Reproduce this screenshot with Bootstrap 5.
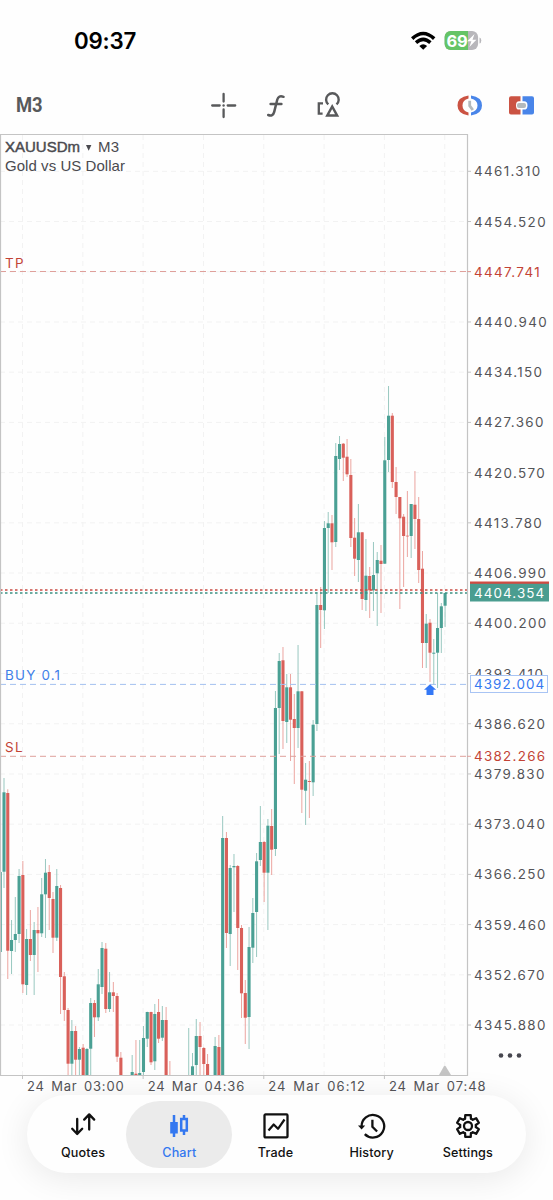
<!DOCTYPE html>
<html lang="en">
<head>
<meta charset="utf-8">
<meta name="viewport" content="width=device-width, initial-scale=1">
<title>XAUUSDm M3</title>
<link href="https://cdn.jsdelivr.net/npm/bootstrap@5.3.0/dist/css/bootstrap.min.css" rel="stylesheet">
<style>
body{font-family:Inter,"Liberation Sans",sans-serif;background:#fefefe;overflow:hidden}
.app{width:553px;height:1200px}
.statusbar{height:80px;padding:2px 71px 0 74px}
.clock{font-size:22.3px;font-weight:600;color:#000;letter-spacing:-.2px}
.toolbar{height:50px;padding:0 18px 0 16px}
.period{font:700 20px Roboto,sans-serif;color:#58595b;width:26px}
.period span{display:inline-block;transform:scaleX(.92);transform-origin:left}
.plot{display:block;height:965px;width:553px}
.plot text{font-family:Inter,sans-serif;font-size:13.4px}
.plot .sym{font-family:"Liberation Sans",sans-serif;font-size:15px}
.tabs{height:78px;width:499px;margin-left:27px;border-radius:39px;background:#fefefe;box-shadow:0 5px 34px rgba(0,0,0,.09);padding:6px 5px 5px 8px}
.tabitem{width:96.2px;border-radius:34px;color:#111;font-size:12.6px;font-weight:500;padding-top:11px;letter-spacing:.15px}
.tabitem svg{display:block;margin-bottom:5px}
.tabitem span{line-height:15px}
.tabitem.active{background:#ebebeb;color:#3478f0;width:106px;margin:0 -4.9px}
</style>
</head>
<body>
<div class="app d-flex flex-column">
  <header class="statusbar d-flex align-items-center justify-content-between">
    <span class="clock">09:37</span>
    <svg width="72" height="24" viewBox="410 29 72 24">
      <g fill="none" stroke="#000" stroke-width="3.500"><path d="M412.200 38.600Q423.200 28.400 434.200 38.600"/><path d="M416 42.600Q423.200 36 430.400 42.600"/></g>
      <path d="M419.300 46.100Q423.200 42.600 427.100 46.100L423.200 49.800Z"/>
      <clipPath id="bat"><rect x="444.600" y="31" width="33.500" height="19" rx="6"/></clipPath>
      <g clip-path="url(#bat)"><path fill="#b8b7bb" d="M444 31h35v20h-35z"/><path fill="#65c466" d="M444 31h24v20h-24z"/></g>
      <path d="M479.500 37.500q1.800.500 1.800 3t-1.800 3z" fill="#b8b7bb"/>
      <text x="446.600" y="46.600" font-size="16.500" font-weight="700" fill="#fff" textLength="21">69</text>
      <path d="M474.500 34l-7.300 7.300h4.200l-2 5.700 7-7.200h-3.900z" fill="#fff"/>
    </svg>
  </header>
  <nav class="toolbar d-flex align-items-center">
    <span class="period"><span>M3</span></span>
    <svg width="477" height="40" viewBox="58 85 477 40" class="ms-3 flex-shrink-0" fill="none" stroke="#58595b">
      <path d="M212.200 105.500h7.500M227.700 105.500h7.500M223.600 94v7.500M223.600 109.500v7.500" stroke-width="2.300" stroke-linecap="round"/>
      <circle cx="223.600" cy="105.500" r="1.200" fill="#58595b" stroke="none"/>
      <path d="M283.300 96.800q-4.900-1.800-6.200 2.700l-3.100 12.400q-1.200 4.800-6 3.100M270.400 103.900h10.800" stroke-width="2.500" stroke-linecap="round" transform="translate(.2 0)"/>
      <path d="M323 103.300h-4.200v10.400h3.800" stroke-width="2.300"/>
      <path d="M328.300 104.400A6.300 6.300 0 1 1 336.500 104.400" stroke-width="2.400"/>
      <path d="M332.200 106.500l-4.900 9h9.800z" stroke-width="2.500"/>
      <path d="M468.500 95.500Q457.500 97 457.500 105.500T468.500 115.500V112.500Q462.500 111 462.500 105.500T468.500 98.500Z" fill="#cb5343" stroke="none"/>
      <path d="M471 95.500Q482 97 482 105.500T471 115.500V112.500Q477.500 111 477.500 105.500T471 98.500Z" fill="#4985e9" stroke="none"/>
      <path d="M469.700 100.700v5l3.100 4.300" stroke="#b3b9bc" stroke-width="2.800"/>
      <path d="M511 96.300h9.500v4.900h-1.500q-3 0-3 4.200t3 4.200h1.500v5H511q-2 0-2-2v-14.300q0-2 2-2z" fill="#cb5343" stroke="none"/>
      <path d="M522.500 96.300H532q2 0 2 2v14.300q0 2-2 2h-9.500v-5h1.500q3.500 0 3.500-4.200t-3.500-4.200h-1.500z" fill="#4985e9" stroke="none"/>
      <rect x="517" y="103" width="9" height="5" rx="2" fill="#b3b9bc" stroke="none"/>
    </svg>
  </nav>
  <svg id="plot" class="plot flex-shrink-0" viewBox="0 130 553 965"></svg>
  <nav class="tabs d-flex flex-shrink-0 text-center">
    <div class="tabitem d-flex flex-column align-items-center">
      <svg width="28" height="28" viewBox="0 0 28 28" fill="none" stroke="#111" stroke-width="2.300" stroke-linecap="round" stroke-linejoin="round"><path d="M8.500 6v15M3.500 15.800l5 5.200 5-5.200M20.500 16.500V2M15.500 6.600l5-5.200 5 5.200" transform="translate(-.3 1)"/></svg><span>Quotes</span></div>
    <div class="tabitem active d-flex flex-column align-items-center flex-shrink-0">
      <svg width="28" height="28" viewBox="0 0 28 28" fill="none" stroke="#3478f0" stroke-width="2.500"><path d="M9 3v22M19 3v3M19 19v4"/><path d="M5.200 10h7.600v11.500H5.200z" fill="#3478f0" stroke="none"/><path d="M16.200 7h5.600v11.500h-5.600z"/></svg><span>Chart</span></div>
    <div class="tabitem d-flex flex-column align-items-center">
      <svg width="28" height="28" viewBox="0 0 28 28" fill="none" stroke="#111" stroke-width="2.300" stroke-linejoin="round"><rect x="2.500" y="2.400" width="23" height="23" rx="1"/><path d="M6.500 18.500l5.200-6 4.300 4.300 6.500-9.300" stroke-width="2.200"/></svg><span>Trade</span></div>
    <div class="tabitem d-flex flex-column align-items-center">
      <svg width="28" height="28" viewBox="0 0 28 28" fill="none" stroke="#111" stroke-width="2.300"><path d="M3.600 14.500A11.300 11.300 0 1 1 6.800 22.100"/><path d="M14.400 7.800v6.900l4.700 4.800"/><path d="M0 13.500h7.200l-3.600 4z" fill="#111" stroke="none"/></svg><span>History</span></div>
    <div class="tabitem d-flex flex-column align-items-center">
      <svg width="28" height="28" viewBox="0 0 28 28" fill="none" stroke="#111" stroke-width="2.300" stroke-linejoin="round"><path id="gear"/><circle cx="14" cy="14" r="4"/></svg><span>Settings</span></div>
  </nav>
</div>
<script>
// Candles: slot, direction, high, body top, body bottom, low (canvas y)
const bars = `-1 G 872 872 952 952
0 G 778 792.3 871.7 888
1 R 789.3 793 950.7 979
2 G 920 940 951 974
3 G 897 934 940 952
4 G 869 876 934 943
5 R 861 875 984.3 993
6 G 929 939 985 995
7 R 910 939 955 961
8 G 922 930 955 995
9 R 907 930 933.3 972
10 G 878 894.3 933.3 937
11 G 859 872.7 894.3 938
12 R 865 872 898 930
13 R 892 899 937.7 953
14 G 869 886 937.7 941
15 R 885 888 977 1014
16 R 972 976.3 1010 1021
17 R 1008 1010 1063.7 1075
18 G 1020 1031 1063.7 1075
19 R 1026 1031 1059.7 1075
20 G 1047 1049 1059.7 1075
21 R 1044 1047.7 1075 1075
22 G 1048 1049 1075 1075
23 G 998 1003 1048.7 1075
24 R 1000 1003 1017.3 1037
25 G 969 984.3 1017.3 1021
26 G 942 948 987 994
27 R 943 948.7 1009 1013
28 G 972 992.3 1009 1012
29 R 982 992.3 996 1012
30 R 993 996 1056.7 1062
31 R 1052 1057.7 1075 1075
34 G 1055 1072 1075 1075
35 R 1040 1073.7 1075 1075
36 G 1040 1073 1075 1075
37 G 1026 1038 1072 1075
38 G 1011.7 1012 1038.7 1047
39 R 1011.7 1012 1062.3 1065
40 G 1004 1014 1061.3 1070
41 R 999 1012 1038.7 1043
42 G 1006 1020 1037.7 1041
43 R 1007 1020 1075 1075
44 R 1061 1075 1075 1075
49 G 1028 1075 1075 1075
50 G 1053 1066.3 1075 1075
51 G 1019 1036 1065 1075
52 R 1022 1036 1047 1075
53 R 1047 1048 1064 1075
54 R 1054 1064 1075 1075
56 G 1037 1046 1075 1075
57 R 1035 1047 1075 1075
58 G 816 838 1075 1075
59 R 832 838 933 948
60 G 865 868 934 966
61 G 854 866 867.3 912
62 R 865 866 928 970
63 R 925 928 993.3 1018
64 R 980 993 1017.7 1044
65 G 927 947 1017 1049
66 G 898 913 947.7 963
67 G 853 861.3 912 957
68 G 806 842 860 866
69 R 841 842 872.7 902
70 G 819 825.7 872.7 930
71 R 809 826 849.7 875
72 G 691 708 849 856
73 G 653 661 708 754
74 R 647 660.3 721 749
75 G 674 687.3 722 743
76 R 674 687.3 719.7 761
77 R 694 719 728 784
78 G 645 691.3 728 748
79 R 691 691.3 789.7 813
80 G 763 779.7 790.7 825
81 R 761 781 782 818
82 G 720 724.7 782.3 796
83 G 592 605 724 731
84 R 587 605 610 648
85 G 521 528 610.3 629
86 G 512 523.3 528 593
87 R 515 523.3 542.3 570
88 G 443 456 542 547
89 G 436 444 459 470
90 R 443 443.7 457.7 481
91 R 439 456.7 474.3 477
92 R 459 475 538 547
93 R 518 537.7 558.7 576
94 G 504 532.3 560 582
95 R 532 532.3 599 610
96 G 539 575.7 600 611
97 R 567 576 590.3 618
98 G 542 575 590.3 611
99 G 552 560 573.3 626
100 R 545 560.7 564 613
101 G 437 460.3 563.7 564
102 G 386 415.7 460 472
103 R 413 415.7 482 488
104 R 467 482 497 514
105 R 497 497 518.3 609
106 R 514 516.7 536 587
107 R 491 535.7 536.4 557
108 G 504 504 536 558
109 R 471 504.7 519 549
110 R 497 519 570 583
111 R 551 568.7 643 668
112 G 614 623.7 643 668
113 R 619 622.7 652.7 682
114 G 639 652.7 653.7 685
115 G 593 628 652.7 688
116 G 603 606.3 628 653
117 G 592.7 593 605.7 627`.split("\n").map(r => r.split(" "));
let out = "";
const line = (x1,y1,x2,y2,c,w,d) => { out += `<line x1="${x1}" y1="${y1}" x2="${x2}" y2="${y2}" stroke="${c}" stroke-width="${w||1}"${d?` stroke-dasharray="${d}"`:""}/>`; };
const label = (x,y,s,c,ls,extra) => { out += `<text x="${x}" y="${y}" fill="${c}" letter-spacing="${ls}" ${extra||""}>${s}</text>`; };
for (let i=0;i<8;i++) line(22.5+i*60.32,135,22.5+i*60.32,1075,"#f2f2f2",1,"5 4");
for (let i=0;i<18;i++) {
  const y = 171.3+i*50.22;
  line(0,y,467,y,"#f2f2f2",1,"5 4");
  line(467,y,471,y,"#c4c4c4");
  // the take-profit tag replaces the third tick label
  if (i!==2) label(474,y+5,(4461.31-i*6.79).toFixed(3),"#545458",1.36);
}
for (const [k,d,...v] of bars) {
  const [h,t,b,l] = v.map(Number), x = 4+k*3.77, g = d==="G";
  line(x,h,x,l,g?"#93c5bd":"#eba09b",.95);
  if (b>t) out += `<rect x="${x-1.55}" y="${t}" width="3.1" height="${b-t}" fill="${g?"#4aa094":"#d9605a"}"/>`;
}
line(0,271.5,467,271.5,"#dfa09b",1,"6 4");
line(0,756.3,467,756.3,"#dfa09b",1,"6 4");
line(0,684.4,467,684.4,"#a4c1f0",1,"6 4");
line(0,589.9,467,589.9,"#c94b43",1.5,"2.5 2.5");
line(0,592.9,467,592.9,"#3a9083",1.5,"2.5 2.5");
out += `<path d="M0 134.500H467.500V1075.500H0M.500 134.500V1075" fill="none" stroke="#c4c4c4" stroke-width="1.200"/>`;
for (let i=0;i<4;i++) {
  const x = 22.5+i*120.64;
  line(x,1075,x,1079,"#c4c4c4");
  label(x+4.5,1091,["24 Mar 03:00","24 Mar 04:36","24 Mar 06:12","24 Mar 07:48"][i],"#545458",.9,'textLength="97.5" style="font-size:13px;word-spacing:2px"');
}
out += `<path d="M439 1075l4.800-8.500q1-1.500 2 0l5.200 8.500z" fill="#c4c4c4"/>
<path d="M430 684.300l-6 5.400h2.500v5.300h7v-5.300h2.700z" fill="#3478f6"/>
<rect x="470" y="581.500" width="79" height="12" fill="#cf4c43"/><rect x="470" y="583.800" width="79" height="17.700" fill="#4a9d90"/>
<rect x="470.500" y="675.500" width="77" height="17" fill="#fefefe" stroke="#a8c4f4"/>
<g fill="#47474f"><circle cx="501" cy="1055.500" r="2.300"/><circle cx="510" cy="1055.500" r="2.300"/><circle cx="519" cy="1055.500" r="2.300"/></g>`;
line(467,271.5,471,271.5,"#dfa09b"); line(467,756.3,471,756.3,"#dfa09b");
label(474,276.5,"4447.741","#c34335",1.36);
label(474,761.3,"4382.266","#c34335",1.3);
label(474,689.3,"4392.004","#3478f0",1.1);
label(474,597.8,"4404.354","#fff",1.1);
label(5,267.5,"TP","#c34335",1.3); label(5,752.3,"SL","#c34335",1.3);
label(5,680,"BUY 0.1","#3f80e8",1.2);
label(5,152,"XAUUSDm","#4a4a4f",0,'class="sym" stroke="#4a4a4f" stroke-width=".45" textLength="75"');
label(98,152,"M3","#4a4a4f",0,'class="sym" textLength="21"');
label(5,171,"Gold vs US Dollar","#4a4a4f",0,'class="sym" textLength="120"');
out += `<path d="M86 145h5.400l-2.700 5.800z" fill="#4a4a4f"/>`;
document.getElementById("plot").innerHTML = out;

// Six-toothed settings gear outline
const pts = [];
for (let n=0;n<6;n++) for (const [a,r] of [[-22,7.8],[-14,11.300],[14,11.300],[22,7.8],[30,8]]) {
  const t = (n*60+a-90)*Math.PI/180;
  pts.push((14+r*Math.cos(t)).toFixed(2)+" "+(14+r*Math.sin(t)).toFixed(2));
}
document.getElementById("gear").setAttribute("d","M"+pts.join("L")+"Z");
</script>
<script src="https://cdn.jsdelivr.net/npm/bootstrap@5.3.0/dist/js/bootstrap.bundle.min.js"></script>
</body>
</html>
